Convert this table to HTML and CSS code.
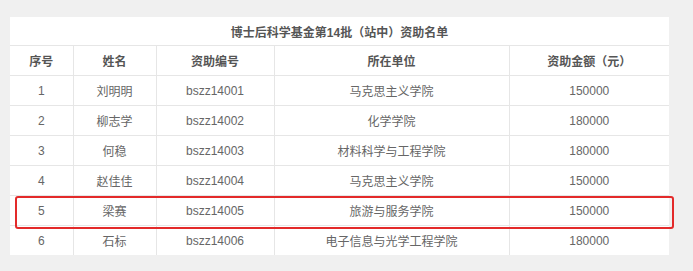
FILE: index.html
```html
<!DOCTYPE html>
<html lang="zh">
<head>
<meta charset="utf-8">
<link rel="stylesheet" href="styles.css">
</head>
<body>
<div class="wrap">
  <table class="list">
    <colgroup>
      <col class="c1"><col class="c2"><col class="c3"><col class="c4"><col class="c5">
    </colgroup>
    <tr class="title"><th colspan="5">博士后科学基金第14批（站中）资助名单</th></tr>
    <tr class="head"><th>序号</th><th>姓名</th><th>资助编号</th><th>所在单位</th><th>资助金额（元）</th></tr>
    <tr><td>1</td><td>刘明明</td><td>bszz14001</td><td>马克思主义学院</td><td>150000</td></tr>
    <tr><td>2</td><td>柳志学</td><td>bszz14002</td><td>化学学院</td><td>180000</td></tr>
    <tr><td>3</td><td>何稳</td><td>bszz14003</td><td>材料科学与工程学院</td><td>180000</td></tr>
    <tr><td>4</td><td>赵佳佳</td><td>bszz14004</td><td>马克思主义学院</td><td>150000</td></tr>
    <tr><td>5</td><td>梁赛</td><td>bszz14005</td><td>旅游与服务学院</td><td>150000</td></tr>
    <tr><td>6</td><td>石标</td><td>bszz14006</td><td>电子信息与光学工程学院</td><td>180000</td></tr>
  </table>
  <div class="mark"></div>
</div>
</body>
</html>
```
FILE: styles.css
```css
html, body {
  margin: 0;
  padding: 0;
  background: #f0f0f0;
}
body {
  font-family: "Liberation Sans", "Noto Sans CJK SC", sans-serif;
  font-size: 12px;
  color: #666;
}
.wrap {
  position: relative;
  padding: 17px 0 0 10px;
}
.list {
  width: 659px;
  table-layout: fixed;
  border-collapse: collapse;
  background: #fff;
}
.c1 { width: 63px; }
.c2 { width: 83px; }
.c3 { width: 118px; }
.c4 { width: 235px; }
.c5 { width: 160px; }
.list th, .list td {
  height: 29px;
  padding: 0;
  border: 1px solid #e6e6e6;
  text-align: center;
  vertical-align: middle;
}
.list th {
  font-weight: bold;
  color: #555;
}
.title th {
  height: 28px;
  border-top: none;
}
.list tr:last-child td {
  border-bottom: none;
}
.list tr td:first-child, .list tr th:first-child {
  border-left: none;
}
.list tr td:last-child, .list tr th:last-child {
  border-right: none;
}
.mark {
  position: absolute;
  left: 15px;
  top: 196px;
  width: 655px;
  height: 29px;
  border: 2px solid #e32a2a;
  border-radius: 3px;
}
```
